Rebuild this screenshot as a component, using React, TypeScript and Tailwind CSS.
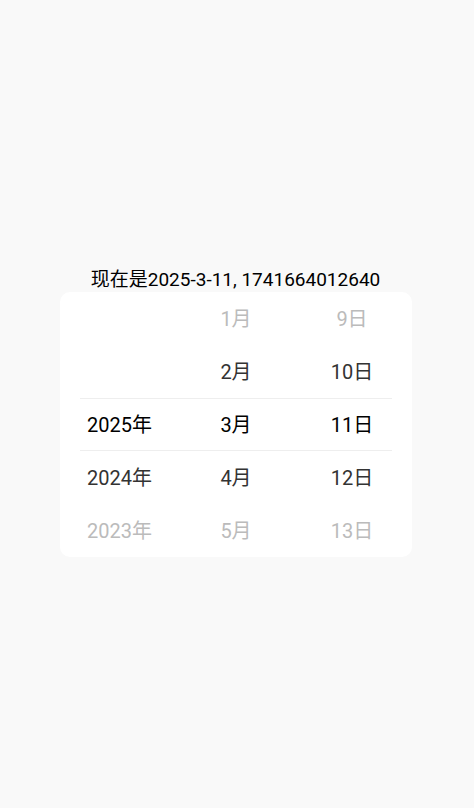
const years = ["", "", "2025年", "2024年", "2023年"];
const months = ["1月", "2月", "3月", "4月", "5月"];
const days = ["9日", "10日", "11日", "12日", "13日"];
const tones = [
  "text-[#bbbbbb]",
  "text-[#333333]",
  "text-black",
  "text-[#333333]",
  "text-[#bbbbbb]",
];

export default function App() {
  return (
    <div className="min-h-[808px] w-full bg-[#f9f9f9]">
      <div
        className="w-[472px] pt-[268px] flex flex-col items-center"
        style={{ fontFamily: 'Roboto, "Noto Sans CJK SC", sans-serif' }}
      >
        <div className="text-[19px] leading-[24px] text-black -ml-[1px]">
          现在是2025-3-11, 1741664012640
        </div>
        <div className="w-[352px] bg-white rounded-[10px] px-5">
          {[0, 1, 2, 3, 4].map((i) => (
            <div
              key={i}
              className={
                "flex items-center h-[53px] text-[20px] " +
                (i === 2 ? "border-y border-[#eeeeee]" : "")
              }
            >
              <div className={"w-[104px] pl-[7px] " + tones[i]}>{years[i]}</div>
              <div className={"w-[104px] text-center " + tones[i]}>{months[i]}</div>
              <div className={"flex-1 text-center pl-6 " + tones[i]}>{days[i]}</div>
            </div>
          ))}
        </div>
      </div>
    </div>
  );
}
